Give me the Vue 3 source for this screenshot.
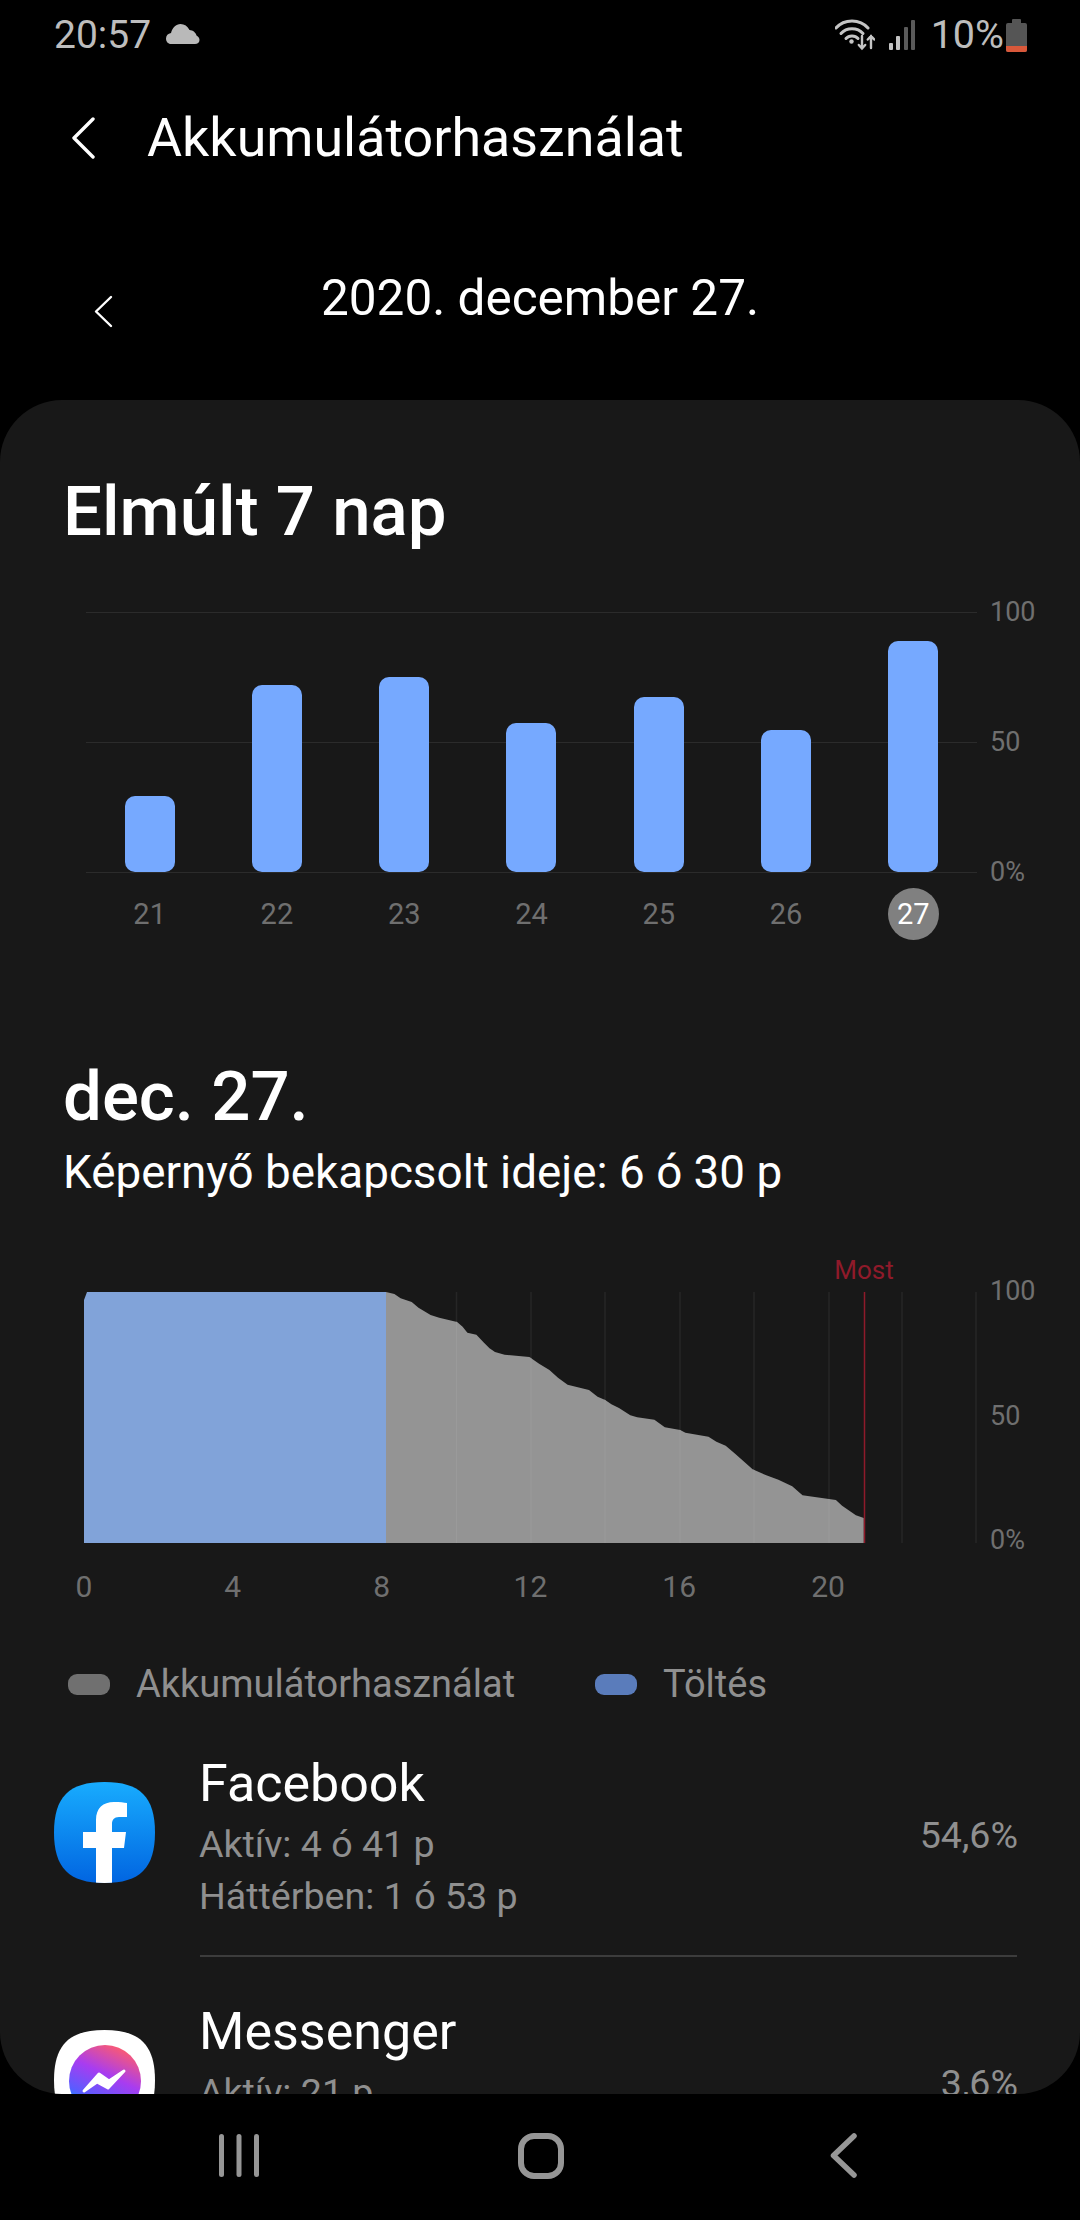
<template>
  <div class="screen">
    <div class="status-bar">
      <div class="status-left">
        <span class="status-text">20:57</span>
        <svg class="cloud" width="34" height="20" viewBox="0 0 34 20">
          <path d="M5 20C2 20 0 17.500 0 14.500 0 11.500 2 9.500 5 9 6.500 3.500 10 0 14.500 0 18.500 0 21.500 2 23.500 6 27 6 30 9 30.500 11.500 32.500 12.500 33.500 14.500 33.500 16 33.500 18.500 31.500 20 29 20Z" fill="#b9b9b9" />
        </svg>
      </div>
      <div class="status-right">
        <svg width="40" height="32" viewBox="0 0 40 32" fill="none" stroke="#c4c4c4" stroke-width="3" stroke-linecap="round">
          <path d="M1 9C9 -0.500 25 -0.500 33 9" />
          <path d="M6 14.500C11.500 8 22.500 8 28 14.500" />
          <path d="M11 19.500C14 16 20 16 23 19.500" />
          <circle cx="16.500" cy="22.500" r="2.200" fill="#c4c4c4" stroke="none" />
          <path d="M27 17V29M23.800 26L27 29.500 30.200 26" stroke-width="2.400" />
          <path d="M36 29V17M32.800 20.500L36 17 39.200 20.500" stroke-width="2.400" />
        </svg>
        <svg class="signal" width="26" height="31" viewBox="0 0 26 31">
          <rect x="0" y="23" width="4" height="7" rx="1" fill="#c4c4c4" />
          <rect x="7" y="16" width="4" height="14" rx="1" fill="#c4c4c4" />
          <rect x="15" y="7" width="4" height="23" rx="1" fill="#5a5a5a" />
          <rect x="22" y="0" width="4" height="30" rx="1" fill="#5a5a5a" />
        </svg>
        <span class="status-text battery-text">10%</span>
        <svg width="21" height="33" viewBox="0 0 21 33">
          <rect x="6" y="0" width="9" height="5" rx="1" fill="#555" />
          <rect x="0" y="4" width="21" height="29" rx="2" fill="#555" />
          <path d="M0 27H21V31a2 2 0 0 1-2 2H2a2 2 0 0 1-2-2Z" fill="#d9583a" />
        </svg>
      </div>
    </div>

    <div class="app-header">
      <svg class="back" width="24" height="42" viewBox="0 0 24 42" fill="none" stroke="#fff" stroke-width="3.400" stroke-linecap="round" stroke-linejoin="round">
        <path d="M22 2L3 21 22 40" />
      </svg>
      <h1 class="app-title">Akkumulátorhasználat</h1>
    </div>

    <div class="date-row">
      <svg class="date-back" width="20" height="33" viewBox="0 0 20 33" fill="none" stroke="#fff" stroke-width="2.400" stroke-linecap="round" stroke-linejoin="round">
        <path d="M18 2L3 16.500 18 31" />
      </svg>
      <span class="date-text">2020. december 27.</span>
    </div>

    <main class="card">
      <h2 class="big-title week-title">Elmúlt 7 nap</h2>

      <div class="week-chart">
        <div class="plot">
          <div class="grid-line" style="top: 0"></div>
          <div class="grid-line" style="top: 50%"></div>
          <div class="grid-line" style="top: 100%"></div>
          <div class="bars">
            <div v-for="d in week" :key="d.day" class="bar-col">
              <div class="bar" :style="{ height: d.pct + '%' }"></div>
            </div>
          </div>
          <span class="y-label" style="top: 0">100</span>
          <span class="y-label" style="top: 50%">50</span>
          <span class="y-label" style="top: 100%">0%</span>
        </div>
        <div class="days">
          <span v-for="d in week" :key="d.day" class="day" :class="{ current: d.day === 27 }">{{ d.day }}</span>
        </div>
      </div>

      <div class="day-head">
        <h2 class="big-title">dec. 27.</h2>
        <p class="screen-time">Képernyő bekapcsolt ideje: 6 ó 30 p</p>
      </div>

      <svg class="day-chart" width="1080" height="370" viewBox="0 1240 1080 370">
        <defs>
          <clipPath id="under-curve">
            <path :d="curvePath" />
          </clipPath>
        </defs>
        <line v-for="x in gridX" :key="x" :x1="x" :x2="x" y1="1292" y2="1543" stroke="#262626" stroke-width="1.500" />
        <path d="M84 1543V1300L87 1292H386V1543Z" fill="#81a3d9" />
        <path :d="curvePath" fill="#949494" />
        <g clip-path="url(#under-curve)">
          <line v-for="x in gridX" :key="'o' + x" :x1="x" :x2="x" y1="1292" y2="1543" stroke="#9a9a9a" stroke-width="1" />
        </g>
        <line x1="864.500" x2="864.500" y1="1292" y2="1543" stroke="#8f1a2a" stroke-width="1.500" />
        <text class="now-label" x="864" y="1279" text-anchor="middle">Most</text>
        <text v-for="t in yTicks" :key="t.label" class="axis" x="990" :y="t.y">{{ t.label }}</text>
        <text v-for="t in xTicks" :key="t" class="axis tick" :x="84 + t * 37.200" y="1597" text-anchor="middle">{{ t }}</text>
      </svg>

      <div class="legend">
        <span class="legend-pill gray"></span>
        <span class="legend-text first">Akkumulátorhasználat</span>
        <span class="legend-pill blue"></span>
        <span class="legend-text">Töltés</span>
      </div>

      <div class="app-row">
        <svg class="app-icon" width="101" height="101" viewBox="0 0 101 101">
          <defs>
            <linearGradient id="fb" x1="0" y1="0" x2="0" y2="1">
              <stop offset="0" stop-color="#18acfe" />
              <stop offset="1" stop-color="#0165e1" />
            </linearGradient>
            <clipPath id="squircle-fb">
              <path d="M50.500 0C86 0 101 15 101 50.500S86 101 50.500 101 0 86 0 50.500 15 0 50.500 0Z" />
            </clipPath>
          </defs>
          <path d="M50.500 0C86 0 101 15 101 50.500S86 101 50.500 101 0 86 0 50.500 15 0 50.500 0Z" fill="url(#fb)" />
          <path clip-path="url(#squircle-fb)" d="M42 101V66H29V50H42V38C42 26 49 20 60 20 66 20 70 20.500 73 21V35H65C60 35 58 38 58 42V50H72L70 66H58V101Z" fill="#fff" />
        </svg>
        <div class="app-info">
          <div class="app-name">Facebook</div>
          <div class="app-sub">Aktív: 4 ó 41 p</div>
          <div class="app-sub">Háttérben: 1 ó 53 p</div>
        </div>
        <span class="app-pct">54,6%</span>
      </div>

      <div class="app-row second">
        <svg class="app-icon" width="101" height="101" viewBox="0 0 101 101">
          <defs>
            <linearGradient id="ms" x1="0.750" y1="0.050" x2="0.350" y2="0.900">
              <stop offset="0" stop-color="#fb5a72" />
              <stop offset="0.450" stop-color="#a83cf0" />
              <stop offset="0.850" stop-color="#5a5cff" />
              <stop offset="1" stop-color="#1a86ff" />
            </linearGradient>
          </defs>
          <path d="M50.500 0C86 0 101 15 101 50.500S86 101 50.500 101 0 86 0 50.500 15 0 50.500 0Z" fill="#fff" />
          <circle cx="51" cy="51" r="36" fill="url(#ms)" />
          <path d="M30 61L45 44 55 51 70 41 54 58 43 52Z" fill="#fff" stroke="#fff" stroke-width="3" stroke-linejoin="round" />
        </svg>
        <div class="app-info">
          <div class="app-name">Messenger</div>
          <div class="app-sub">Aktív: 21 p</div>
          <div class="app-sub">Háttérben: 9 p</div>
        </div>
        <span class="app-pct">3,6%</span>
      </div>
    </main>

    <nav class="nav-bar">
      <svg width="40" height="45" viewBox="0 0 40 45" fill="#969696">
        <rect x="0" y="1" width="5" height="43" rx="2.500" />
        <rect x="17.500" y="1" width="5" height="43" rx="2.500" />
        <rect x="35" y="1" width="5" height="43" rx="2.500" />
      </svg>
      <svg width="46" height="46" viewBox="0 0 46 46" fill="none" stroke="#969696" stroke-width="6">
        <rect x="3" y="3" width="40" height="40" rx="13" />
      </svg>
      <svg class="nav-back" width="27" height="45" viewBox="0 0 27 45" fill="none" stroke="#969696" stroke-width="5.500" stroke-linecap="round" stroke-linejoin="round">
        <path d="M24 3L3.500 22.500 24 42" />
      </svg>
    </nav>
  </div>
</template>

<script setup>
import { computed } from 'vue'

const week = [
  { day: 21, pct: 29.2 },
  { day: 22, pct: 71.9 },
  { day: 23, pct: 75 },
  { day: 24, pct: 57.3 },
  { day: 25, pct: 67.3 },
  { day: 26, pct: 54.6 },
  { day: 27, pct: 88.8 },
]

const gridX = [456.5, 531, 605, 680, 754, 829, 902, 976]
const xTicks = [0, 4, 8, 12, 16, 20]
const yTicks = [
  { label: '100', y: 1300 },
  { label: '50', y: 1425 },
  { label: '0%', y: 1549 },
]

// battery curve, read off the reference as [x, y] pixels
const curve = [
  [386, 1292], [394.4, 1294], [400.6, 1298.3], [411.7, 1302], [418.5, 1307.7], [430.6, 1315],
  [439.2, 1317.7], [457.1, 1322], [462.6, 1326.7], [467.4, 1332.7], [476.4, 1334.7], [484, 1342.7],
  [489.5, 1348.3], [495, 1352], [504.6, 1354.7], [529.4, 1357], [539.1, 1363.7], [549.4, 1370],
  [558, 1377.7], [567.6, 1384.7], [589, 1390], [597.6, 1396.7], [605.2, 1400], [611.4, 1404.3],
  [619, 1408], [630.3, 1415.3], [637.2, 1417.3], [654.4, 1419.7], [664.8, 1427.3], [680.2, 1430],
  [685.4, 1432.7], [708.5, 1436.7], [716.4, 1441.7], [725.7, 1445.7], [735.4, 1454], [752.6, 1469.3],
  [766.3, 1475.3], [778.4, 1479.7], [792.2, 1486.3], [802.5, 1495.3], [835.9, 1500], [842.1, 1505.7],
  [855.9, 1515.3], [863.8, 1518],
]

const curvePath = computed(() => {
  const line = curve.map(p => p.join(' ')).join('L')
  return `M386 1543L${line}L863.8 1543Z`
})
</script>

<style>
html,
body {
  background: #000;
}
</style>

<style scoped>
.screen {
  width: 1080px;
  height: 2220px;
  background: #000;
  display: flex;
  flex-direction: column;
  overflow: hidden;
  font-family: Roboto, "Liberation Sans", sans-serif;
  color: #fff;
}

.status-bar {
  height: 70px;
  flex: none;
  display: flex;
  justify-content: space-between;
  align-items: center;
  padding: 0 53px 0 54px;
}

.status-left,
.status-right {
  display: flex;
  align-items: center;
}

.status-text {
  font-size: 39px;
  line-height: 70px;
  color: #bdbdbd;
}

.cloud {
  margin-left: 15px;
  margin-top: -3px;
}

.signal {
  margin-left: 14px;
}

.battery-text {
  font-size: 39.5px;
  margin: 0 2px 0 16px;
}

.app-header {
  height: 136px;
  flex: none;
  display: flex;
  align-items: center;
  padding-left: 71px;
}

.app-title {
  margin: 0 0 0 52px;
  font-size: 53.8px;
  font-weight: 400;
  line-height: 64px;
}

.date-row {
  height: 194px;
  flex: none;
  position: relative;
  display: flex;
  justify-content: center;
  padding-top: 62px;
  box-sizing: border-box;
}

.date-text {
  font-size: 49.5px;
  line-height: 60px;
}

.date-back {
  position: absolute;
  left: 93px;
  top: 89px;
}

.card {
  height: 1694px;
  flex: none;
  background: #181818;
  border-radius: 62px;
  overflow: hidden;
}

.big-title {
  margin: 0;
  font-size: 69px;
  font-weight: 500;
  line-height: 64px;
}

.week-title {
  padding: 80px 0 0 63px;
}

.week-chart {
  margin-top: 68px;
  padding-left: 86px;
  height: 360px;
}

.plot {
  position: relative;
  width: 891px;
  height: 260px;
}

.grid-line {
  position: absolute;
  left: 0;
  right: 0;
  height: 1px;
  background: #2b2b2b;
}

.bars {
  position: relative;
  height: 100%;
  display: grid;
  grid-template-columns: repeat(7, 1fr);
}

.bar-col {
  display: flex;
  justify-content: center;
  align-items: flex-end;
}

.bar {
  width: 50px;
  background: #76a9ff;
  border-radius: 10px;
}

.y-label {
  position: absolute;
  left: 904px;
  transform: translateY(-50%);
  font-size: 27px;
  line-height: 30px;
  color: #6f6f6f;
}

.days {
  width: 891px;
  display: grid;
  grid-template-columns: repeat(7, 1fr);
  justify-items: center;
  margin-top: 16px;
}

.day {
  width: 51px;
  height: 52px;
  border-radius: 50%;
  font-size: 29px;
  line-height: 52px;
  text-align: center;
  color: #6f6f6f;
}

.day.current {
  background: #808080;
  color: #fff;
}

.day-head {
  padding: 93px 0 0 63px;
}

.screen-time {
  margin: 18px 0 0;
  font-size: 45.8px;
  line-height: 52px;
}

.day-chart {
  display: block;
  margin-top: 41px;
}

.axis {
  font-size: 27px;
  fill: #6f6f6f;
}

.axis.tick {
  font-size: 30px;
}

.now-label {
  font-size: 26px;
  fill: #8f1a2a;
}

.legend {
  display: flex;
  align-items: center;
  padding-left: 68px;
  height: 50px;
  margin-top: 49px;
}

.legend-pill {
  width: 42px;
  height: 21px;
  border-radius: 9px;
}

.legend-pill.gray {
  background: #707070;
}

.legend-pill.blue {
  background: #5a7cbb;
}

.legend-text {
  margin-left: 26px;
  font-size: 38px;
  line-height: 50px;
  color: #8f8f8f;
}

.legend-text.first {
  margin-right: 80px;
}

.app-row {
  position: relative;
  display: flex;
  margin-top: 30px;
  padding: 0 62px 0 54px;
  height: 218px;
}

.app-row::after {
  content: "";
  position: absolute;
  left: 200px;
  right: 63px;
  bottom: 0;
  height: 2px;
  background: #3c3c3c;
}

.app-icon {
  flex: none;
  margin-top: 43px;
}

.app-info {
  margin-left: 44px;
  flex: 1;
}

.app-name {
  margin: 15px 0 4px;
  font-size: 52px;
  line-height: 60px;
}

.app-sub {
  font-size: 37.6px;
  line-height: 52px;
  color: #8f8f8f;
}

.app-pct {
  font-size: 37.6px;
  line-height: 52px;
  margin-top: 70px;
  color: #8f8f8f;
}

.nav-bar {
  flex: 1;
  display: grid;
  grid-template-columns: 40px 46px 34px;
  column-gap: 259px;
  justify-content: start;
  padding: 39px 0 0 219px;
  box-sizing: border-box;
}

.nav-back {
  justify-self: end;
}
</style>
